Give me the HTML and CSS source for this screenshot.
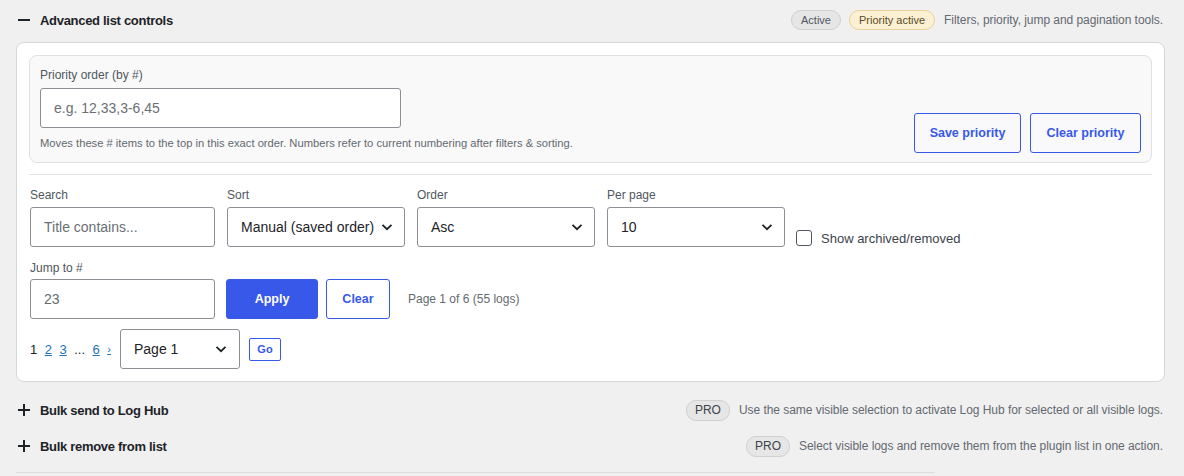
FILE: index.html
```html
<!DOCTYPE html>
<html lang="en">
<head>
<meta charset="utf-8">
<title>Advanced list controls</title>
<link rel="stylesheet" href="styles.css">
</head>
<body>
<div class="page">
  <div class="section-head">
    <div class="toggle">
      <svg class="tog-icon" width="12" height="12" viewBox="0 0 12 12"><path d="M0 6h12" stroke="#1d2327" stroke-width="2"/></svg>
      <span class="sec-title">Advanced list controls</span>
    </div>
    <div class="head-meta">
      <span class="badge">Active</span>
      <span class="badge badge-warn">Priority active</span>
      <span class="meta-text">Filters, priority, jump and pagination tools.</span>
    </div>
  </div>

  <div class="card">
    <div class="priority-box">
      <div class="priority-main">
        <label class="lbl">Priority order (by #)</label>
        <input class="inp inp-priority" type="text" placeholder="e.g. 12,33,3-6,45">
        <p class="help">Moves these # items to the top in this exact order. Numbers refer to current numbering after filters &amp; sorting.</p>
      </div>
      <div class="priority-actions">
        <button class="btn btn-outline btn-lg">Save priority</button>
        <button class="btn btn-outline btn-lg btn-wide">Clear priority</button>
      </div>
    </div>

    <div class="divider"></div>

    <div class="filters">
      <div class="field field-first">
        <label class="lbl">Search</label>
        <input class="inp" type="text" placeholder="Title contains...">
      </div>
      <div class="field">
        <label class="lbl">Sort</label>
        <div class="select"><span>Manual (saved order)</span><svg width="12" height="8" viewBox="0 0 12 8"><path d="M1.5 1.8 6 6.2l4.5-4.4" fill="none" stroke="#1d2327" stroke-width="1.8"/></svg></div>
      </div>
      <div class="field">
        <label class="lbl">Order</label>
        <div class="select"><span>Asc</span><svg width="12" height="8" viewBox="0 0 12 8"><path d="M1.5 1.8 6 6.2l4.5-4.4" fill="none" stroke="#1d2327" stroke-width="1.8"/></svg></div>
      </div>
      <div class="field">
        <label class="lbl">Per page</label>
        <div class="select"><span>10</span><svg width="12" height="8" viewBox="0 0 12 8"><path d="M1.5 1.8 6 6.2l4.5-4.4" fill="none" stroke="#1d2327" stroke-width="1.8"/></svg></div>
      </div>
      <label class="check"><span class="box"></span><span>Show archived/removed</span></label>
    </div>

    <div class="jump">
      <label class="lbl">Jump to #</label>
      <div class="jump-row">
        <input class="inp inp-jump" type="text" value="23">
        <button class="btn btn-primary">Apply</button>
        <button class="btn btn-outline btn-clear">Clear</button>
        <span class="page-info">Page 1 of 6 (55 logs)</span>
      </div>
    </div>

    <div class="pager">
      <div class="pages">
        <span class="cur">1</span>
        <a href="#">2</a>
        <a href="#">3</a>
        <span class="dots">...</span>
        <a href="#">6</a>
        <a href="#" class="next">›</a>
      </div>
      <div class="select select-page"><span>Page 1</span><svg width="12" height="8" viewBox="0 0 12 8"><path d="M1.5 1.8 6 6.2l4.5-4.4" fill="none" stroke="#1d2327" stroke-width="1.8"/></svg></div>
      <button class="btn btn-outline btn-go">Go</button>
    </div>
  </div>

  <div class="section-head section-row">
    <div class="toggle">
      <svg class="tog-icon" width="12" height="12" viewBox="0 0 12 12"><path d="M0 6h12M6 0v12" stroke="#1d2327" stroke-width="2"/></svg>
      <span class="sec-title">Bulk send to Log Hub</span>
    </div>
    <div class="head-meta">
      <span class="badge badge-pro">PRO</span>
      <span class="meta-text">Use the same visible selection to activate Log Hub for selected or all visible logs.</span>
    </div>
  </div>
  <div class="section-head section-row">
    <div class="toggle">
      <svg class="tog-icon" width="12" height="12" viewBox="0 0 12 12"><path d="M0 6h12M6 0v12" stroke="#1d2327" stroke-width="2"/></svg>
      <span class="sec-title">Bulk remove from list</span>
    </div>
    <div class="head-meta">
      <span class="badge badge-pro">PRO</span>
      <span class="meta-text">Select visible logs and remove them from the plugin list in one action.</span>
    </div>
  </div>
  <div class="bottom-rule"></div>
</div>
</body>
</html>
```

FILE: styles.css
```css
* { box-sizing: border-box; }
html, body { margin: 0; padding: 0; }
body {
  background: #f0f0f1;
  font-family: "Liberation Sans", Arial, sans-serif;
  color: #1d2327;
  width: 1184px;
  height: 476px;
  overflow: hidden;
}
.page { padding: 8px 19px 0 16px; }

.section-head {
  display: flex;
  align-items: center;
  justify-content: space-between;
  height: 24px;
}
.toggle { display: flex; align-items: center; gap: 10px; padding-left: 2px; }
.tog-icon { display: block; }
.sec-title { font-size: 13px; font-weight: 700; color: #1d2327; letter-spacing: -0.3px; }
.head-meta { display: flex; align-items: center; gap: 8px; padding-right: 2px; }
.meta-text { font-size: 12px; color: #646970; margin-left: 1px; letter-spacing: -0.05px; }
.badge {
  display: inline-flex;
  align-items: center;
  height: 20px;
  padding: 0 9px;
  border-radius: 10px;
  background: #e6e6e7;
  border: 1px solid #cfd0d2;
  font-size: 11px;
  color: #50575e;
}
.badge-warn { background: #fbf0d3; border-color: #e6d198; color: #5a4b23; }
.badge-pro { height: 21px; padding: 0 8px; font-size: 12px; color: #3c434a; }

.card {
  margin-top: 10px;
  background: #fff;
  border: 1px solid #d5d6d8;
  border-radius: 8px;
  padding: 12px;
}
.priority-box {
  display: flex;
  justify-content: space-between;
  background: #f9f9f9;
  border: 1px solid #dfe0e2;
  border-radius: 8px;
  padding: 11px 10px;
}
.priority-main { display: flex; flex-direction: column; }
.lbl { display: block; font-size: 12px; line-height: 16px; color: #50575e; }
.inp {
  height: 40px;
  border: 1px solid #8c8f94;
  border-radius: 3px;
  background: #fff;
  font-family: inherit;
  font-size: 14px;
  color: #646970;
  padding: 0 13px;
  outline: none;
}
.inp::placeholder { color: #6b6f74; }
.inp-priority { width: 361px; margin-top: 5px; }
.help { margin: 7px 0 0; font-size: 11.2px; line-height: 16px; color: #646970; }
.priority-actions { display: flex; align-items: flex-end; gap: 9px; margin-bottom: -2px; }

.btn {
  font-family: inherit;
  font-weight: 700;
  font-size: 12.5px;
  border-radius: 3px;
  cursor: pointer;
  display: inline-flex;
  align-items: center;
  justify-content: center;
  padding: 0;
}
.btn-outline { background: #fff; border: 1px solid #3858e9; color: #3858e9; }
.btn-lg { height: 40px; width: 107px; background: #f9f9fb; }
.btn-wide { width: 111px; }
.btn-primary { background: #3858e9; border: 1px solid #3858e9; color: #fff; height: 40px; width: 92px; }
.btn-clear { height: 40px; width: 64px; }
.btn-go { height: 23px; width: 32px; font-size: 11px; border-radius: 2px; margin-left: 9px; }

.divider { height: 1px; background: #e4e5e7; margin-top: 11px; }

.filters {
  display: flex;
  align-items: flex-end;
  gap: 12px;
  margin-top: 12px;
  padding-left: 1px;
}
.field { display: flex; flex-direction: column; gap: 4px; width: 178px; }
.field-first { width: 185px; }
.select {
  height: 40px;
  border: 1px solid #8c8f94;
  border-radius: 3px;
  background: #fff;
  display: flex;
  align-items: center;
  justify-content: space-between;
  padding: 0 11px 0 13px;
  font-size: 14px;
  color: #1d2327;
}
.select svg { display: block; flex: none; }
.check {
  display: flex;
  align-items: center;
  gap: 9px;
  font-size: 13px;
  color: #3c434a;
  margin-bottom: 1px;
  margin-left: -1px;
}
.box {
  width: 16px;
  height: 16px;
  border: 1px solid #50575e;
  border-radius: 3px;
  background: #fff;
  display: block;
}

.jump { margin-top: 13px; padding-left: 1px; }
.jump-row { display: flex; align-items: center; margin-top: 3px; }
.inp-jump { width: 185px; }
.jump-row .btn-primary { margin-left: 11px; }
.jump-row .btn-clear { margin-left: 8px; }
.page-info { margin-left: 18px; font-size: 12px; color: #646970; }

.pager { display: flex; align-items: center; margin-top: 10px; padding-left: 1px; }
.pages { display: flex; align-items: center; gap: 7.5px; font-size: 13px; width: 90px; flex: none; }
.pages a { color: #2271b1; text-decoration: underline; }
.pages .cur { color: #1d2327; }
.pages .dots { color: #1d2327; }
.pages .next { font-size: 11px; }
.select-page { width: 120px; padding-right: 12px; }

.section-row { height: 36px; }
.card + .section-row { margin-top: 10px; }
.bottom-rule { margin-top: 8px; width: 919px; height: 1px; background: #dcdcde; }
```
